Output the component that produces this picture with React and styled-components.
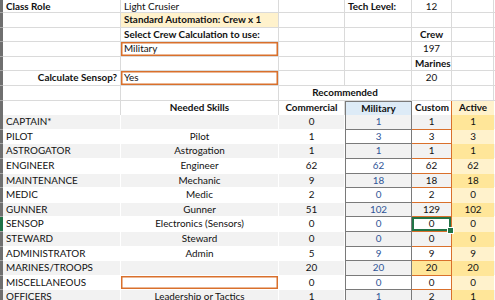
import React from "react";
import styled, { createGlobalStyle, css } from "styled-components";

const GlobalStyle = createGlobalStyle`
  html, body { margin: 0; padding: 0; background: #fff; overflow: hidden; }
  body {
    font-family: Lato, "Liberation Sans", sans-serif;
    font-size: 9.9px;
    color: #000;
  }
`;

const ORANGE = "#d9702c";
const DARK = "#7a7a7a";

const Sheet = styled.div`
  width: 495px;
  height: 300px;
  overflow: hidden;
`;

const Row = styled.div`
  display: grid;
  grid-template-columns: 3px 118px 158px 66px 67px 40px 42px 40px;
  height: ${p => p.$h || 14.6}px;
  line-height: ${p => (p.$h || 14.6) - 1}px;
`;

const RowHead = styled.div`
  box-sizing: border-box;
  background: ${p => (p.$active ? "#1f7246" : "#6f6f6f")};
  border-bottom: 1px solid #a6a6a6;
`;

const Cell = styled.div`
  position: relative;
  box-sizing: border-box;
  grid-column: span ${p => p.$span || 1};
  padding: 0 3px;
  border-right: 1px solid ${p => p.$line || "#dadada"};
  border-bottom: 1px solid ${p => p.$line || "#dadada"};
  background: ${p => p.$bg || "#fff"};
  color: #111;
  font-weight: ${p => (p.$bold ? 700 : 400)};
  text-align: ${p => p.$align || "left"};
  white-space: nowrap;
  ${p =>
    p.$input &&
    css`
      box-shadow: inset 0 0 0 1.5px ${ORANGE};
    `}
`;

const BodyCell = styled(Cell)`
  border-color: #fff;
`;

const MilitaryCell = styled(Cell)`
  text-align: center;
  color: #2f5597;
  border-left: 1px solid ${DARK};
  border-right: 1px solid ${DARK};
  border-bottom: 1px solid ${DARK};
  ${p =>
    p.$head &&
    css`
      border-top: 1px solid ${DARK};
      background: #ddebf7;
      color: #111;
      font-weight: 700;
    `}
`;

const CustomCell = styled(Cell)`
  text-align: center;
  border-right: 1.5px solid ${ORANGE};
  border-bottom: 1px solid ${ORANGE};
  ${p =>
    p.$selected &&
    css`
      box-shadow: inset 0 0 0 2px #217346;
    `}
`;

const Handle = styled.span`
  position: absolute;
  right: -3px;
  bottom: -3px;
  width: 5px;
  height: 5px;
  background: #217346;
  border: 1px solid #fff;
  z-index: 2;
`;

const ActiveCell = styled(Cell)`
  text-align: center;
  border: none;
`;

const HeadCell = styled(Cell)`
  text-align: center;
  font-weight: 700;
`;

const crew = [
  ["CAPTAIN*", "", 0, 1, 1, 1],
  ["PILOT", "Pilot", 1, 3, 3, 3],
  ["ASTROGATOR", "Astrogation", 1, 1, 1, 1],
  ["ENGINEER", "Engineer", 62, 62, 62, 62],
  ["MAINTENANCE", "Mechanic", 9, 18, 18, 18],
  ["MEDIC", "Medic", 2, 0, 2, 0],
  ["GUNNER", "Gunner", 51, 102, 129, 102],
  ["SENSOP", "Electronics (Sensors)", 0, 0, 0, 0],
  ["STEWARD", "Steward", 0, 0, 0, 0],
  ["ADMINISTRATOR", "Admin", 5, 9, 9, 9],
  ["MARINES/TROOPS", "", 20, 20, 20, 20],
  ["MISCELLANEOUS", "", 0, 0, 0, 0],
  ["OFFICERS", "Leadership or Tactics", 1, 1, 2, 1],
];

const GRAY = "#f2f2f2";

export default function App() {
  return (
    <>
      <GlobalStyle />
      <Sheet>
        <Row $h={13}>
          <RowHead />
          <Cell $bold>Class Role</Cell>
          <Cell>Light Crusier</Cell>
          <Cell />
          <Cell $bold>Tech Level:</Cell>
          <Cell $align="center">12</Cell>
          <Cell />
          <Cell />
        </Row>
        <Row>
          <RowHead />
          <Cell />
          <Cell $bold $bg="#fff2cc">Standard Automation: Crew x 1</Cell>
          <Cell />
          <Cell />
          <Cell />
          <Cell />
          <Cell />
        </Row>
        <Row>
          <RowHead />
          <Cell />
          <Cell $bold>Select Crew Calculation to use:</Cell>
          <Cell />
          <Cell />
          <Cell $bold $align="center">Crew</Cell>
          <Cell />
          <Cell />
        </Row>
        <Row>
          <RowHead />
          <Cell />
          <Cell $input>Military</Cell>
          <Cell />
          <Cell />
          <Cell $align="center">197</Cell>
          <Cell />
          <Cell />
        </Row>
        <Row>
          <RowHead />
          <Cell />
          <Cell />
          <Cell />
          <Cell />
          <Cell $bold $align="center">Marines</Cell>
          <Cell />
          <Cell />
        </Row>
        <Row>
          <RowHead />
          <Cell $bold $align="right">Calculate Sensop?</Cell>
          <Cell $input>Yes</Cell>
          <Cell />
          <Cell />
          <Cell $align="center">20</Cell>
          <Cell />
          <Cell />
        </Row>
        <Row>
          <RowHead />
          <Cell />
          <Cell />
          <Cell $span={2} $bold $align="center">Recommended</Cell>
          <Cell />
          <Cell />
          <Cell />
        </Row>
        <Row>
          <RowHead />
          <Cell />
          <HeadCell>Needed Skills</HeadCell>
          <HeadCell>Commercial</HeadCell>
          <MilitaryCell $head>Military</MilitaryCell>
          <CustomCell $bold>Custom</CustomCell>
          <ActiveCell $bold $bg="#fff2cc">Active</ActiveCell>
          <Cell />
        </Row>
        {crew.map(([role, skill, com, mil, cus, act], i) => {
          const striped = i % 2 === 0;
          const bg = striped ? GRAY : "#fff";
          const isMisc = role === "MISCELLANEOUS";
          const isSensop = role === "SENSOP";
          const isMarines = role === "MARINES/TROOPS";
          return (
            <Row key={role}>
              <RowHead $active={isSensop} />
              <BodyCell $bg={bg}>{role}</BodyCell>
              <BodyCell $bg={bg} $align="center" $input={isMisc}>
                {skill}
              </BodyCell>
              <BodyCell $bg={bg} $align="center">
                {com}
              </BodyCell>
              <MilitaryCell $bg={bg}>{mil}</MilitaryCell>
              <CustomCell
                $bg={isMarines ? "#ffe699" : bg}
                $selected={isSensop}
              >
                {cus}
                {isSensop && <Handle />}
              </CustomCell>
              <ActiveCell $bg={striped ? "#ffe699" : "#fff2cc"}>{act}</ActiveCell>
              <BodyCell $bg={bg} />
            </Row>
          );
        })}
      </Sheet>
    </>
  );
}
